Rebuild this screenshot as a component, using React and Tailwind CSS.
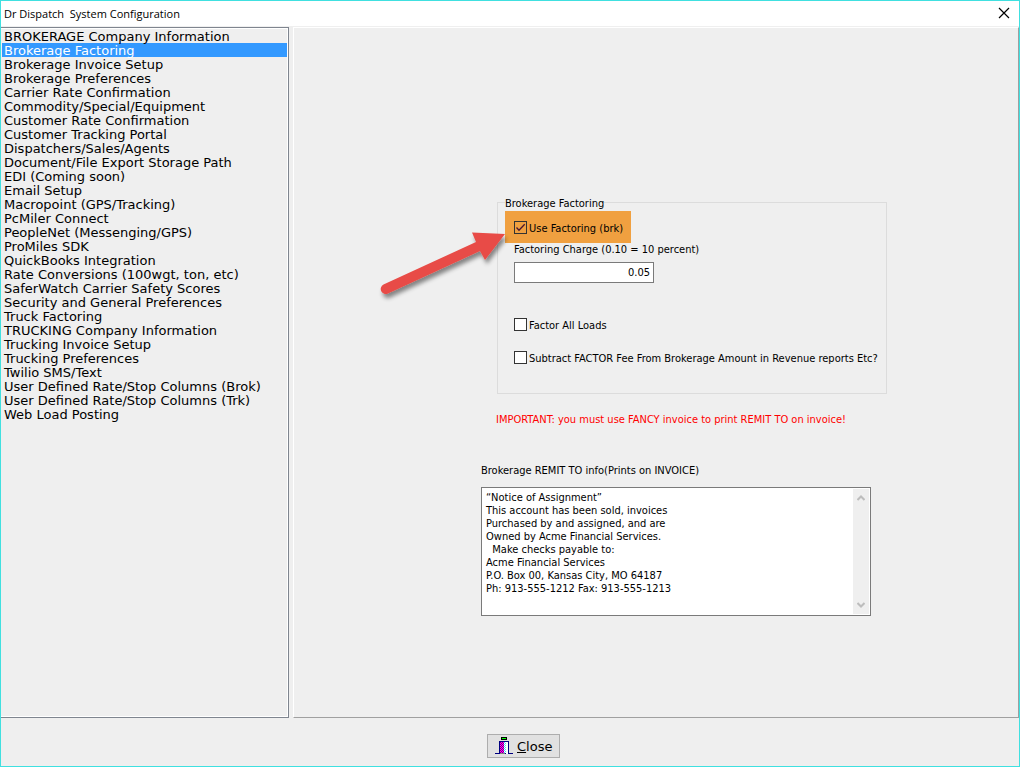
import React, { useState } from 'react';

const sections = [
  'BROKERAGE Company Information',
  'Brokerage Factoring',
  'Brokerage Invoice Setup',
  'Brokerage Preferences',
  'Carrier Rate Confirmation',
  'Commodity/Special/Equipment',
  'Customer Rate Confirmation',
  'Customer Tracking Portal',
  'Dispatchers/Sales/Agents',
  'Document/File Export Storage Path',
  'EDI (Coming soon)',
  'Email Setup',
  'Macropoint (GPS/Tracking)',
  'PcMiler Connect',
  'PeopleNet (Messenging/GPS)',
  'ProMiles SDK',
  'QuickBooks Integration',
  'Rate Conversions (100wgt, ton, etc)',
  'SaferWatch Carrier Safety Scores',
  'Security and General Preferences',
  'Truck Factoring',
  'TRUCKING Company Information',
  'Trucking Invoice Setup',
  'Trucking Preferences',
  'Twilio SMS/Text',
  'User Defined Rate/Stop Columns (Brok)',
  'User Defined Rate/Stop Columns (Trk)',
  'Web Load Posting',
];

const remitInfo = `“Notice of Assignment”
This account has been sold, invoices
Purchased by and assigned, and are
Owned by Acme Financial Services.
  Make checks payable to:
Acme Financial Services
P.O. Box 00, Kansas City, MO 64187
Ph: 913-555-1212 Fax: 913-555-1213`;

function Checkbox({ label, checked, onChange, className = '' }) {
  return (
    <label className={`flex w-fit items-center gap-0.5 ${className}`}>
      <span className="relative flex">
        <input
          type="checkbox"
          checked={checked}
          onChange={(e) => onChange(e.target.checked)}
          className="peer h-[13px] w-[13px] appearance-none border border-[#333] bg-white checked:bg-transparent"
        />
        <svg viewBox="0 0 13 13" className="pointer-events-none absolute inset-0 hidden h-[13px] w-[13px] peer-checked:block">
          <path d="M2.5 6.5 L5 9.2 L10.7 3.2" fill="none" stroke="#4a1530" strokeWidth="1.3" />
        </svg>
      </span>
      <span className="pt-0.5">{label}</span>
    </label>
  );
}

function Arrow() {
  return (
    <svg
      viewBox="0 0 140 80"
      className="pointer-events-none absolute top-[30px] -left-[122px] h-[80px] w-[140px]"
      aria-hidden="true"
    >
      <defs>
        <filter id="arrow-shadow" x="-10%" y="-10%" width="130%" height="140%">
          <feDropShadow dx="2" dy="4" stdDeviation="2" floodColor="#000" floodOpacity="0.45" />
        </filter>
      </defs>
      <path
        d="M130 8 L110 34 L105 25 L13 67.5 A5 5 0 0 1 8.500 58.500 L101 16 L97 6.500 Z"
        fill="#e84c46"
        filter="url(#arrow-shadow)"
      />
    </svg>
  );
}

function DoorIcon() {
  return (
    <svg viewBox="0 0 18 18" className="h-[18px] w-[18px]" shapeRendering="crispEdges" aria-hidden="true">
      <defs>
        <pattern id="door-magenta" width="2" height="2" patternUnits="userSpaceOnUse">
          <rect width="2" height="2" fill="#ff00ff" />
          <rect width="1" height="1" fill="#800080" />
          <rect x="1" y="1" width="1" height="1" fill="#800080" />
        </pattern>
        <pattern id="door-cyan" width="2" height="2" patternUnits="userSpaceOnUse">
          <rect width="2" height="2" fill="#fff" />
          <rect width="1" height="1" fill="#40e8e8" />
          <rect x="1" y="1" width="1" height="1" fill="#40e8e8" />
        </pattern>
      </defs>
      <rect x="6" y="0" width="6" height="3" fill="#000" />
      <rect x="7" y="1" width="4" height="1" fill="#0f0" />
      <rect x="4" y="4" width="10" height="13" fill="#000080" />
      <rect x="5" y="5" width="4" height="11" fill="url(#door-magenta)" />
      <rect x="9" y="5" width="2" height="11" fill="url(#door-cyan)" />
      <rect x="11" y="5" width="2" height="12" fill="#fff" />
      <rect x="0" y="16" width="5" height="1" fill="#000080" />
      <rect x="5" y="16" width="5" height="1" fill="#808080" />
      <rect x="14" y="16" width="4" height="1" fill="#000080" />
    </svg>
  );
}

export default function App() {
  const [active, setActive] = useState('Brokerage Factoring');
  const [useFactoring, setUseFactoring] = useState(true);
  const [factorAll, setFactorAll] = useState(false);
  const [subtractFee, setSubtractFee] = useState(false);
  const [charge, setCharge] = useState('0.05');
  const [remit, setRemit] = useState(remitInfo);

  return (
    <div className="flex h-screen flex-col border border-[#40e0e0] bg-[#efefef] text-[11px] leading-[13px] text-black font-['DejaVu_Sans_Condensed','DejaVu_Sans',sans-serif]">
      <header className="flex h-[25px] shrink-0 items-center justify-between bg-white pr-[9px] pb-px pl-[3px]">
        <h1 className="font-['Open_Sans',sans-serif] whitespace-pre">Dr Dispatch  System Configuration</h1>
        <button type="button" aria-label="Close window">
          <svg viewBox="0 0 12 12" className="h-3 w-3">
            <path d="M1 1 L11 11 M11 1 L1 11" stroke="#000" strokeWidth="1.2" />
          </svg>
        </button>
      </header>

      <div className="flex min-h-0 flex-1 gap-1 pt-px">
        <ul className="w-[288px] shrink-0 overflow-hidden border-t border-r border-b border-[#7f858f] font-['DejaVu_Sans',sans-serif] text-[13px] leading-[16px] shadow-[inset_-1px_-1px_0_#fff]">
          <li className="h-px bg-white" />
          {sections.map((name) => (
            <li key={name} className="px-px">
              <button
                type="button"
                onClick={() => setActive(name)}
                className={`block h-[14px] w-full overflow-visible pl-0.5 text-left whitespace-nowrap ${
                  name === active ? 'bg-[#3399ff] text-white' : ''
                }`}
              >
                {name}
              </button>
            </li>
          ))}
        </ul>

        <main className="flex-1 border-t border-r border-b border-l border-t-white border-r-[#a0a0a0] border-b-[#a0a0a0] border-l-white pt-[168px] pl-[187px]">
          <div className="relative ml-4 w-[390px]">
            <fieldset className="h-[198px] border border-[#dcdcdc] pl-[7px]">
              <legend className="h-[13px] leading-[15px]">Brokerage Factoring</legend>
              <Checkbox
                label="Use Factoring (brk)"
                checked={useFactoring}
                onChange={setUseFactoring}
                className="mt-0.5 h-8 bg-[#f0a040] pr-2 pl-[9px]"
              />
              <div className="pl-[9px]">
                <label htmlFor="charge" className="block">Factoring Charge (0.10 = 10 percent)</label>
                <input
                  id="charge"
                  value={charge}
                  onChange={(e) => setCharge(e.target.value)}
                  className="mt-1.5 block h-[21px] w-[140px] border border-[#7a7a7a] bg-white px-[3px] text-right"
                />
                <Checkbox label="Factor All Loads" checked={factorAll} onChange={setFactorAll} className="mt-[34px]" />
                <Checkbox
                  label="Subtract FACTOR Fee From Brokerage Amount in Revenue reports Etc?"
                  checked={subtractFee}
                  onChange={setSubtractFee}
                  className="mt-[18px]"
                />
              </div>
            </fieldset>
            <Arrow />
          </div>
          <p className="mt-[19px] ml-[15px] text-[#ff0000]">
            IMPORTANT: you must use FANCY invoice to print REMIT TO on invoice!
          </p>

          <label htmlFor="remit" className="mt-[38px] block">Brokerage REMIT TO info(Prints on INVOICE)</label>
          <div className="mt-[10px] flex h-[129px] w-[390px] border border-[#7a7a7a] bg-white p-px">
            <textarea
              id="remit"
              value={remit}
              onChange={(e) => setRemit(e.target.value)}
              className="flex-1 resize-none overflow-hidden px-[3px] pt-0.5 outline-none"
            />
            <div className="flex w-4 flex-col items-center justify-between bg-[#efefef] py-1.5 text-[#bdbdbd]">
              <button type="button" aria-label="Scroll up">
                <svg viewBox="0 0 8 6" className="h-1.5 w-2">
                  <path d="M0.500 5 L4 1.500 L7.500 5" fill="none" stroke="currentColor" strokeWidth="2" />
                </svg>
              </button>
              <button type="button" aria-label="Scroll down">
                <svg viewBox="0 0 8 6" className="h-1.5 w-2">
                  <path d="M0.500 1 L4 4.500 L7.500 1" fill="none" stroke="currentColor" strokeWidth="2" />
                </svg>
              </button>
            </div>
          </div>
        </main>
      </div>

      <footer className="flex h-12 shrink-0 items-start justify-center pt-4">
        <button
          type="button"
          className="mr-[-27px] flex h-6 w-[73px] items-center gap-1 border border-[#adadad] bg-[#e1e1e1] pl-[7px] font-['DejaVu_Sans',sans-serif] text-[13px]"
        >
          <DoorIcon />
          <span><u>C</u>lose</span>
        </button>
      </footer>
    </div>
  );
}
